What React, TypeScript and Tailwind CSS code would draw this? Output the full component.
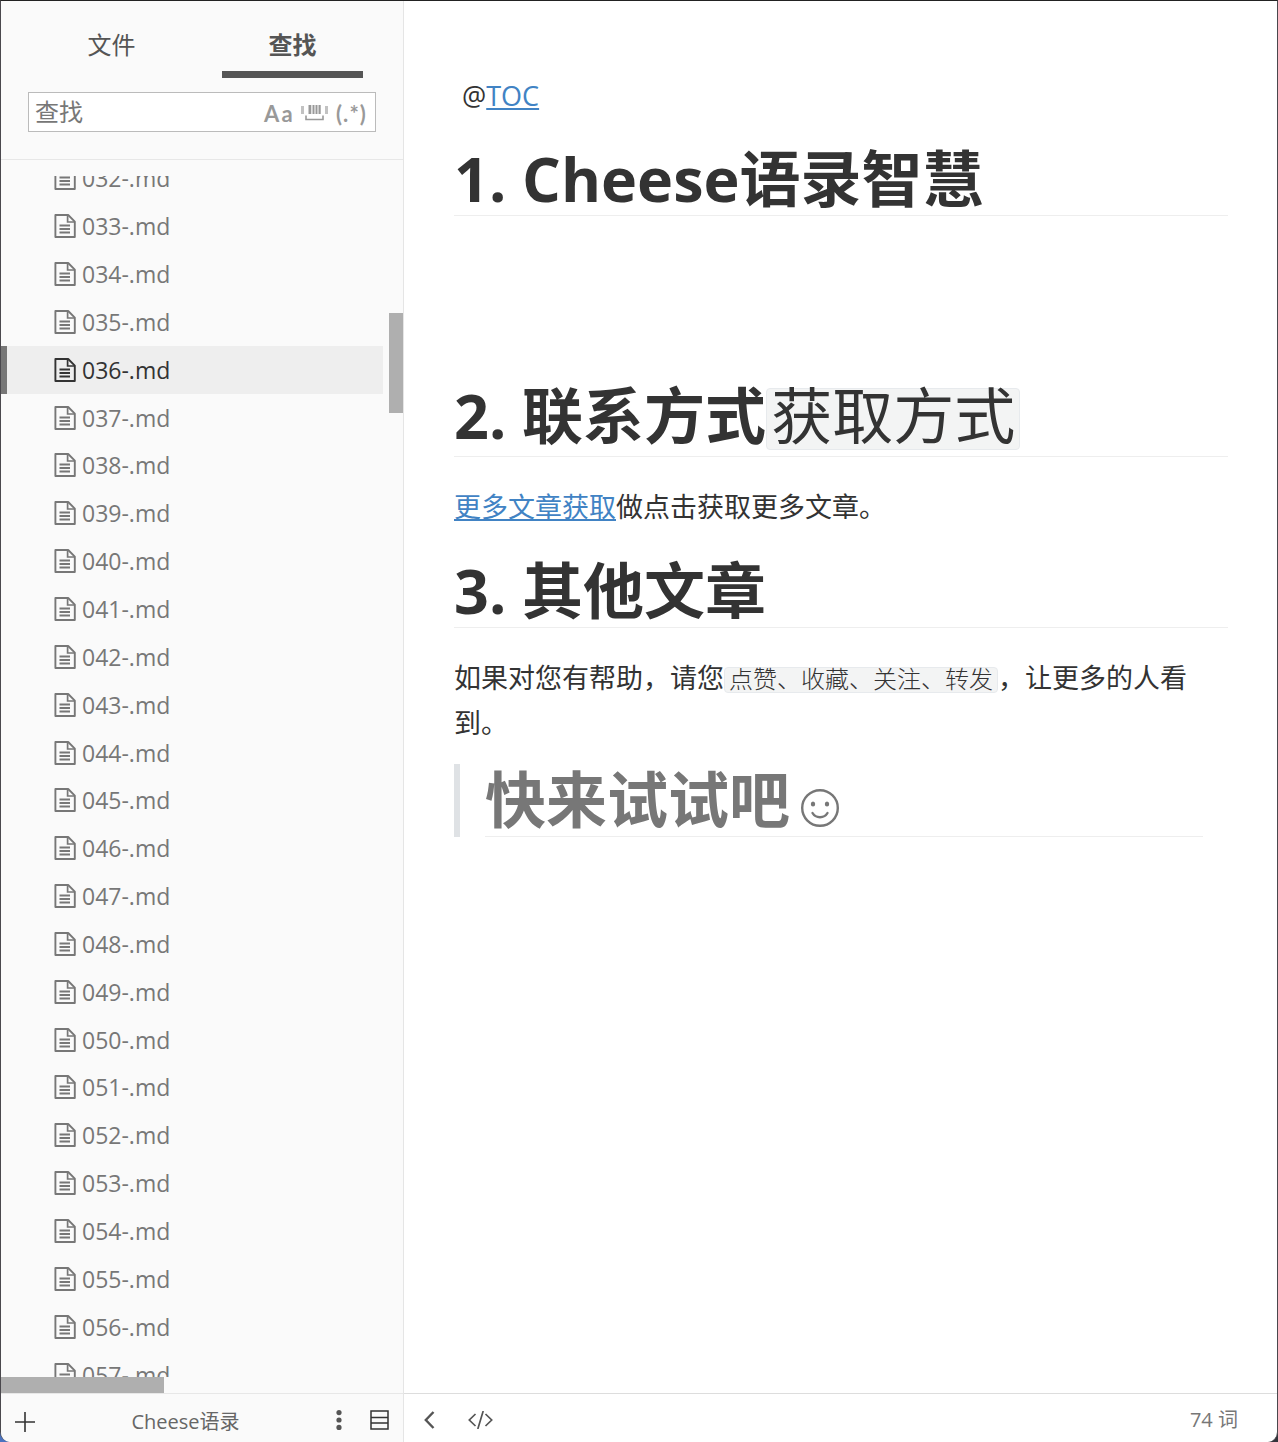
import { useState } from "react";
import clsx from "clsx";

const FILES = Array.from({ length: 26 }, (_, i) => `0${i + 32}-.md`);

function FileIcon() {
  return (
    <svg width="22" height="24" viewBox="0 0 22 24" fill="none" stroke="currentColor" strokeWidth="1.9" className="shrink-0" aria-hidden="true">
      <path d="M1.4 1h12.8l6.6 6.6V23H1.4z" strokeLinejoin="round" />
      <path d="M13.6 1v7h7" strokeWidth="1.7" />
      <path d="M5.5 11.5h10.5M5.5 15h10.5M5.5 18.5h10.5" />
    </svg>
  );
}

function Smiley() {
  return (
    <svg width="40" height="40" viewBox="0 0 40 40" fill="none" stroke="currentColor" strokeWidth="2.4" className="ml-2.5 inline-block align-[-5px]" role="img" aria-label="☺">
      <circle cx="20" cy="20" r="17.8" />
      <path d="M12.5 25c3.2 5.6 11.8 5.6 15 0" strokeLinecap="round" />
      <ellipse cx="13" cy="16" rx="2.2" ry="2.6" fill="currentColor" stroke="none" />
      <ellipse cx="27" cy="16" rx="2.2" ry="2.6" fill="currentColor" stroke="none" />
    </svg>
  );
}

const heading = "border-b border-[#eeeeee] text-[61px] font-bold leading-[72px]";
const code = "inline-block rounded border border-[#e7eaed] bg-[#f3f4f4] px-1 font-['Liberation_Serif','Noto_Sans_CJK_SC',serif]";

export default function App() {
  const [active, setActive] = useState("036-.md");
  const [query, setQuery] = useState("");

  return (
    <div className="h-screen bg-linear-to-r from-[#4a72c0] from-50% to-[#33343c] to-50% font-['Open_Sans','Noto_Sans_CJK_SC',sans-serif]">
      <div className="flex h-full overflow-hidden rounded-b-[10px] border-x border-t border-[#4a484d] border-t-[#222222] bg-white text-[#333333]">
        {/* Sidebar */}
        <aside className="flex w-[403px] shrink-0 flex-col border-r border-[#e5e5e5] bg-[#fafafa] text-[#777777]">
          <div className="h-[159px] shrink-0 border-b border-[#e7e7e7]">
            <div className="ml-5 grid w-[362px] grid-cols-2 pt-2.5 text-2xl text-[#555555]">
              <button className="mx-5 h-[67px] border-b-[7px] border-transparent pt-2">文件</button>
              <button className="mx-5 h-[67px] border-b-[7px] border-[#555555] pt-2 font-bold">查找</button>
            </div>
            <div className="mx-[27px] mt-3.5 flex h-10 items-center border border-[#bbbbbb] bg-white pr-2 pl-1.5 text-[#999999]">
              <input
                type="text"
                aria-label="查找"
                placeholder="查找"
                value={query}
                onChange={(e) => setQuery(e.target.value)}
                className="min-w-0 flex-1 text-2xl text-[#333333] outline-none placeholder:text-[#777777]"
              />
              <div className="flex items-center gap-1.5 font-['Lato',sans-serif] text-[22px] leading-7 font-bold">
                <button className="pt-1 tracking-widest" title="区分大小写">Aa</button>
                <button title="查找整个单词">
                  <svg width="29" height="20" viewBox="0 0 29 20" fill="currentColor" aria-hidden="true">
                    <path d="M0 4h3v8H0zM24 4h3v8h-3z" opacity=".6" />
                    <path d="M7.500 3h2.800v9H7.500zM11.500 3h2v9h-2zM14.500 3h2v9h-2zM17.500 3h2.200v9h-2.200z" />
                    <path d="M5 13.500v4h17v-4" fill="none" stroke="currentColor" strokeWidth="1.6" />
                  </svg>
                </button>
                <button className="pt-1 tracking-wider" title="正则表达式">(.*)</button>
              </div>
            </div>
          </div>

          {/* File list with its scroll bars */}
          <div className="flex min-h-0 flex-1">
            <div className="mt-4 mr-1.5 flex min-w-0 flex-1 flex-col">
              <div className="flex min-h-0 flex-1 flex-col overflow-hidden">
                <ul className="-mt-[21px] -mb-[22px] flex flex-1 flex-col">
                  {FILES.map((name) => (
                    <li key={name} className="min-h-0 flex-1">
                      <button
                        onClick={() => setActive(name)}
                        className={clsx(
                          "flex h-full w-full items-center gap-1.5 border-l-[6px] pb-px pl-[47px] text-[23px] leading-8",
                          name === active ? "border-[#777777] bg-[#eeeeee] text-[#333333]" : "border-transparent"
                        )}
                      >
                        <FileIcon />
                        {name}
                      </button>
                    </li>
                  ))}
                </ul>
              </div>
              <div className="h-4 w-[163px] shrink-0 bg-[#afafaf]" />
            </div>
            <div className="w-3.5 pt-[153px]">
              <div className="h-[100px] bg-[#afafaf]" />
            </div>
          </div>

          <div className="flex h-[49px] shrink-0 items-center border-t border-[#e7e7e7] px-3.5 pt-2 text-[#555555]">
            <button title="新建文件">
              <svg width="20" height="20" viewBox="0 0 20 20" stroke="#333333" strokeWidth="1.6" aria-hidden="true">
                <path d="M0 10h20M10 0v20" />
              </svg>
            </button>
            <button className="flex-1 text-xl text-[#666666]">Cheese语录</button>
            <button className="mr-7 mb-1" title="更多">
              <svg width="6" height="20" viewBox="0 0 6 20" fill="currentColor" aria-hidden="true">
                <circle cx="3" cy="2.6" r="2.6" />
                <circle cx="3" cy="10" r="2.6" />
                <circle cx="3" cy="17.4" r="2.6" />
              </svg>
            </button>
            <button className="mb-1" title="文件列表">
              <svg width="19" height="20" viewBox="0 0 19 20" fill="none" stroke="#333333" strokeWidth="1.5" aria-hidden="true">
                <path d="M1 1h17v18H1zM1 7.500h17M1 13h17" />
              </svg>
            </button>
          </div>
        </aside>

        {/* Editor */}
        <main className="flex min-w-0 flex-1 flex-col">
          <article className="min-h-0 flex-1 overflow-hidden pt-[72px] pr-[49px] pl-[50px] text-[27px] leading-[45px]">
            <p className="pl-2">
              @<a href="#toc" className="text-[#4183c4] underline">TOC</a>
            </p>
            <h1 className={clsx(heading, "mt-[25px]")}>1. Cheese语录智慧</h1>
            <h1 className={clsx(heading, "mt-[164px] pb-1")}>
              2. 联系方式<code className={clsx(code, "leading-[60px] font-normal")}>获取方式</code>
            </h1>
            <p className="mt-[27px]">
              <a href="#more" className="text-[#4183c4] underline">更多文章获取</a>做点击获取更多文章。
            </p>
            <h1 className={clsx(heading, "mt-[26px]")}>3. 其他文章</h1>
            <p className="mt-[27px]">
              如果对您有帮助，请您<code className={clsx(code, "text-2xl leading-6 font-light")}>点赞、收藏、关注、转发</code>，让更多的人看到。
            </p>
            <blockquote className="mt-[19px] border-l-[6px] border-[#dfe2e5] px-[25px] text-[#777777]">
              <h1 className={heading}>快来试试吧<Smiley /></h1>
            </blockquote>
          </article>

          <footer className="flex h-[49px] shrink-0 items-center border-t border-[#dddddd] pt-1 pr-[39px] pb-px pl-5 text-[#555555]">
            <button title="隐藏侧边栏">
              <svg width="11" height="18" viewBox="0 0 11 18" fill="none" stroke="currentColor" strokeWidth="2.4" aria-hidden="true">
                <path d="M9.5 1L1.8 9l7.7 8" />
              </svg>
            </button>
            <button className="ml-[33px]" title="源代码模式">
              <svg width="25" height="18" viewBox="0 0 25 18" fill="none" stroke="currentColor" strokeWidth="1.7" aria-hidden="true">
                <path d="M7.500 3L1.300 9l6.200 6M17.500 3l6.200 6-6.200 6M15.200 0L9.800 18" />
              </svg>
            </button>
            <button className="ml-auto text-xl text-[#777777]">74 词</button>
          </footer>
        </main>
      </div>
    </div>
  );
}
